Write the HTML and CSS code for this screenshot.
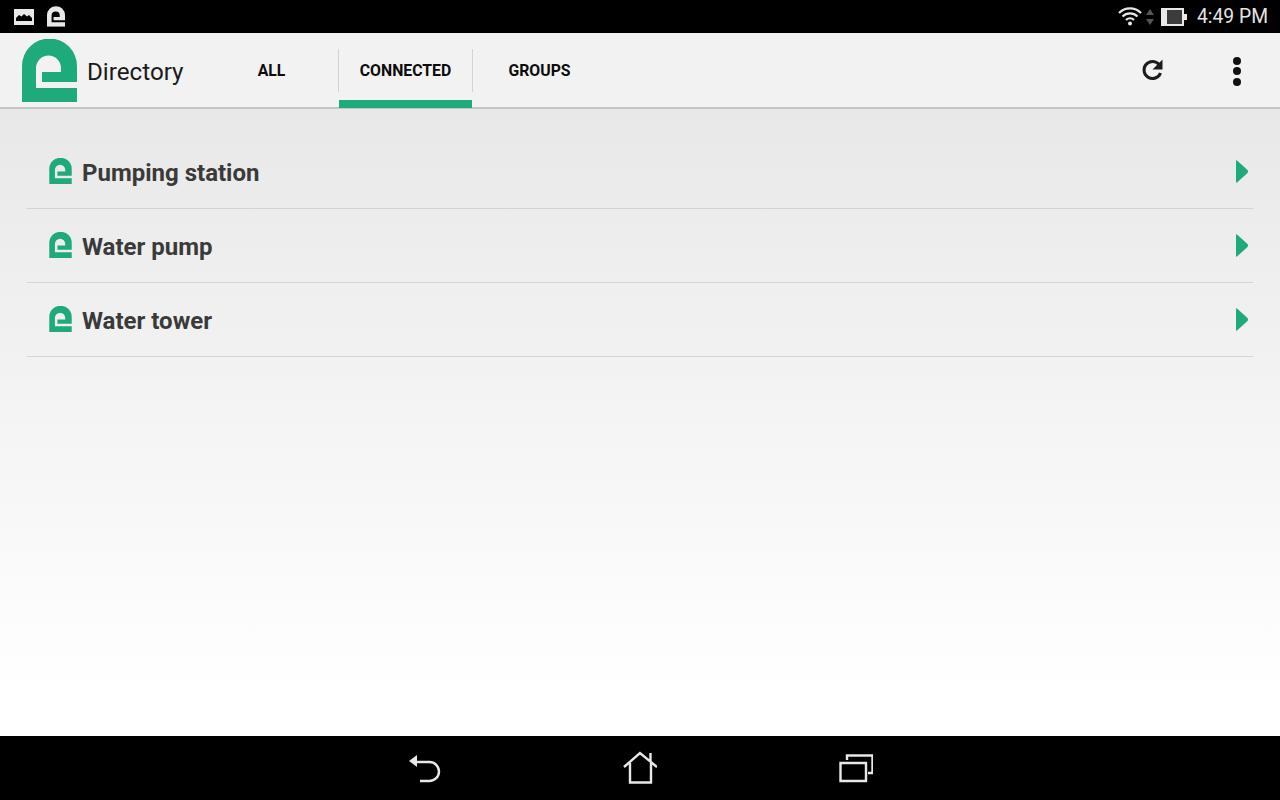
FILE: index.html
```html
<!DOCTYPE html>
<html lang="en">

<head>
    <meta charset="UTF-8">
    <meta name="viewport" content="width=device-width, initial-scale=1.0">
    <title>Directory</title>
    <link rel="stylesheet" href="styles.css">
</head>

<body>
    <svg class="defs" width="0" height="0">
        <symbol id="logo" viewBox="0 0 55 63">
            <path fill-rule="evenodd" d="M0 63V27A27 27 0 0 1 55 27V43H20V33H39V29A12.500 12.500 0 0 0 14 29V49H55V63Z" />
        </symbol>
    </svg>

    <header class="statusbar">
        <div class="status-left">
            <svg class="status-pic" viewBox="0 0 20 16">
                <path fill="#e8e8e8" d="M0 0H20V16H0Z" />
                <path fill="#000" d="M2 12V9L5 6L7.5 7.5L10 5L13 7.5L15 6L18 9V12Z" />
            </svg>
            <svg class="status-logo" viewBox="0 0 55 63">
                <use href="#logo" />
            </svg>
        </div>
        <div class="status-right">
            <svg class="status-wifi" viewBox="0 0 24 20">
                <path d="M1 7A15.5 15.5 0 0 1 23 7M4.500 10.500A10.500 10.500 0 0 1 19.500 10.500M8 14A5.500 5.500 0 0 1 16 14" />
                <circle cx="12" cy="17.500" r="2" />
            </svg>
            <svg class="status-arrows" viewBox="0 0 8 16">
                <path d="M4 0L8 6H0ZM4 16L0 10H8Z" />
            </svg>
            <svg class="status-battery" viewBox="0 0 26 18">
                <path fill="#e8e8e8" d="M0 0H23V6H26V12H23V18H0Z" />
                <path fill="#3c3c3c" d="M6 2H21V16H6Z" />
            </svg>
            <span class="status-time">4:49 PM</span>
        </div>
    </header>

    <nav class="toolbar">
        <svg class="app-logo" viewBox="0 0 55 63">
            <use href="#logo" />
        </svg>
        <span class="app-title">Directory</span>
        <ul class="tabs">
            <li>ALL</li>
            <li class="current">CONNECTED</li>
            <li>GROUPS</li>
        </ul>
        <div class="actions">
            <svg class="refresh" viewBox="0 0 24 24">
                <path fill="none" stroke="#1c1c1c" stroke-width="3" d="M19.500 15A8.500 8.500 0 1 1 18 6.500" />
                <path fill="#1c1c1c" d="M21.500 1.500V11.500H11.500Z" />
            </svg>
            <div class="more">
                <i></i><i></i><i></i>
            </div>
        </div>
    </nav>

    <main class="content">
        <ul class="devices">
            <li>
                <svg class="device-logo" viewBox="0 0 55 63"><use href="#logo" /></svg>
                <span class="device-name">Pumping station</span>
                <svg class="arrow" viewBox="0 0 12 23"><path d="M1 0.500L11.500 10Q12.500 11.500 11.500 13L1 22.500Q0 23 0 22V1Q0 0 1 0.500Z" /></svg>
            </li>
            <li>
                <svg class="device-logo" viewBox="0 0 55 63"><use href="#logo" /></svg>
                <span class="device-name">Water pump</span>
                <svg class="arrow" viewBox="0 0 12 23"><path d="M1 0.500L11.500 10Q12.500 11.500 11.500 13L1 22.500Q0 23 0 22V1Q0 0 1 0.500Z" /></svg>
            </li>
            <li>
                <svg class="device-logo" viewBox="0 0 55 63"><use href="#logo" /></svg>
                <span class="device-name">Water tower</span>
                <svg class="arrow" viewBox="0 0 12 23"><path d="M1 0.500L11.500 10Q12.500 11.500 11.500 13L1 22.500Q0 23 0 22V1Q0 0 1 0.500Z" /></svg>
            </li>
        </ul>
    </main>

    <footer class="navbar">
        <svg class="nav-icon" viewBox="0 0 34 34">
            <path class="solid" d="M2 10L10 4V16Z" />
            <path d="M9 11H22.500A9.500 9.500 0 0 1 22.500 30H13" />
        </svg>
        <svg class="nav-icon" viewBox="0 0 34 34">
            <path d="M1 16L17 2L34 16M7 12V31.500H28V11M27.500 10V2" />
        </svg>
        <svg class="nav-icon" viewBox="0 0 34 34">
            <path d="M1.500 12H27V30H1.500ZM8 9V4.500H33.500V22H29" />
        </svg>
    </footer>
</body>

</html>
```

FILE: styles.css
```css
* {
    margin: 0;
    padding: 0;
    box-sizing: border-box;
}

body {
    display: flex;
    flex-direction: column;
    height: 800px;
    font-family: Roboto, "Liberation Sans", sans-serif;
    overflow: hidden;
}

.defs {
    display: none;
}

.statusbar {
    display: flex;
    justify-content: space-between;
    align-items: center;
    height: 33px;
    padding: 0 12px 0 14px;
    background: #000;
    flex-shrink: 0;
}

.status-left,
.status-right {
    display: flex;
    align-items: center;
}

.status-pic {
    width: 20px;
    height: 16px;
}

.status-logo {
    width: 18px;
    height: 21px;
    margin-left: 13px;
    fill: #e8e8e8;
}

.status-wifi {
    width: 24px;
    height: 20px;
    margin-bottom: 2px;
    fill: #e8e8e8;
    stroke: none;
}

.status-wifi path {
    fill: none;
    stroke: #e8e8e8;
    stroke-width: 2.200;
}

.status-arrows {
    width: 8px;
    height: 16px;
    margin-left: 4px;
    fill: #555;
}

.status-battery {
    width: 26px;
    height: 18px;
    margin-left: 7px;
}

.status-time {
    margin-left: 10px;
    font-size: 19.300px;
    color: #e4e4e4;
}

.toolbar {
    display: flex;
    align-items: stretch;
    height: 76px;
    padding-left: 22px;
    background: #f2f2f2;
    border-bottom: 2px solid #c4c4c4;
    flex-shrink: 0;
}

.app-logo {
    width: 55px;
    height: 63px;
    margin-top: 6px;
    fill: #1eaa7a;
}

.app-title {
    width: 118px;
    margin-left: 10px;
    font-size: 24.200px;
    line-height: 78px;
    color: #1a1a1a;
}

.tabs {
    display: flex;
    gap: 1px;
    list-style: none;
}

.tabs li {
    position: relative;
    width: 133px;
    height: 75px;
    font-size: 15.800px;
    font-weight: 700;
    line-height: 75px;
    text-align: center;
    color: #0c0c0c;
}

.tabs li.current {
    border-bottom: 8px solid #1eaa7a;
}

.tabs li.current::before,
.tabs li.current::after {
    content: "";
    position: absolute;
    top: 16px;
    width: 1px;
    height: 43px;
    background: #d2d2d2;
}

.tabs li.current::before {
    left: -1px;
}

.tabs li.current::after {
    right: -1px;
}

.actions {
    display: flex;
    align-items: center;
    margin-left: auto;
    padding-right: 39px;
}

.refresh {
    width: 24px;
    height: 24px;
}

.more {
    display: flex;
    flex-direction: column;
    gap: 2.500px;
    margin-left: 68px;
    margin-top: 2px;
}

.more i {
    width: 8px;
    height: 8px;
    border-radius: 50%;
    background: #111;
}

.content {
    flex: 1;
    padding: 26px 27px 0;
    background: linear-gradient(#e8e8e8, #fff 93%);
}

.devices {
    list-style: none;
}

.devices li {
    display: flex;
    align-items: center;
    height: 74px;
    padding: 0 5px 0 22px;
    border-bottom: 1px solid #d4d4d4;
}

.device-logo {
    width: 23px;
    height: 26px;
    margin-bottom: 2px;
    fill: #1eaa7a;
}

.device-name {
    margin-left: 10px;
    margin-top: 2px;
    font-size: 24px;
    font-weight: 700;
    color: #3a3a3a;
}

.arrow {
    width: 12px;
    height: 23px;
    margin-left: auto;
    fill: #1eaa7a;
}

.navbar {
    display: flex;
    justify-content: center;
    align-items: center;
    gap: 182px;
    height: 64px;
    background: #000;
    flex-shrink: 0;
}

.nav-icon {
    width: 34px;
    height: 34px;
    fill: none;
    stroke: #e8e8e8;
    stroke-width: 2.400;
}

.nav-icon .solid {
    fill: #e8e8e8;
    stroke: none;
}
```
